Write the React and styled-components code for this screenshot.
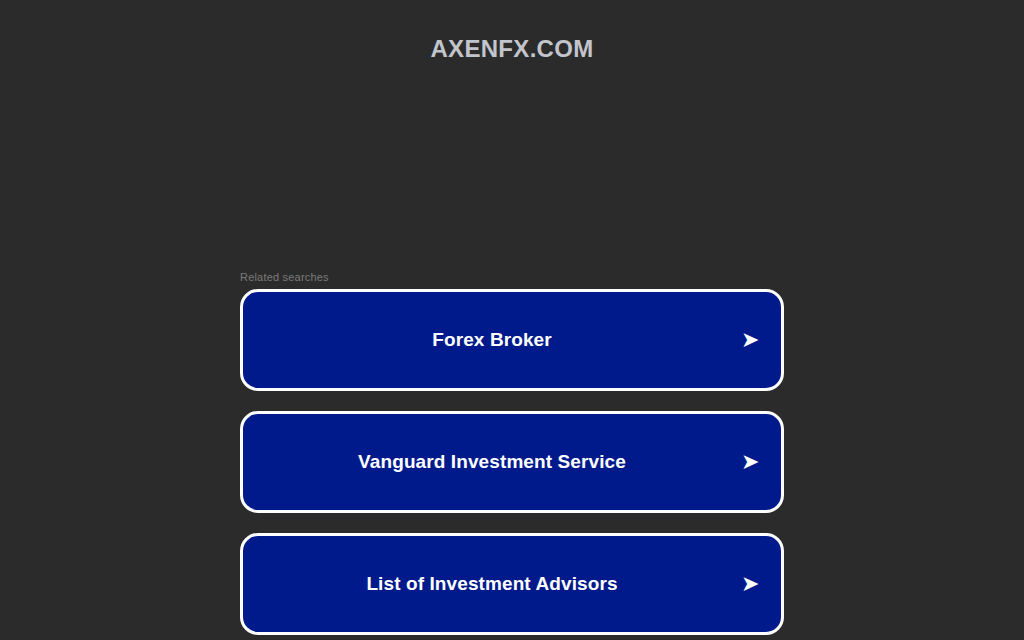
import React from "react";
import styled, { createGlobalStyle } from "styled-components";

const Global = createGlobalStyle`
  html, body {
    margin: 0;
    padding: 0;
    background: #2b2b2b;
    font-family: "Liberation Sans", Arial, sans-serif;
  }
`;

const searches = [
  "Forex Broker",
  "Vanguard Investment Service",
  "List of Investment Advisors",
];

const App = () => {
  return (
    <Page>
      <Global />
      <Domain>AXENFX.COM</Domain>
      <Results>
        <Label>Related searches</Label>
        <List>
          {searches.map((s) => (
            <Card key={s} href="#">
              <CardText>{s}</CardText>
              <Arrow>➤</Arrow>
            </Card>
          ))}
        </List>
      </Results>
    </Page>
  );
};

const Page = styled.div`
  min-height: 640px;
  display: flex;
  flex-direction: column;
  align-items: center;
`;

const Domain = styled.h1`
  margin: 35px 0 0;
  font-size: 24px;
  line-height: 28px;
  font-weight: 700;
  color: #c3c5cd;
  letter-spacing: 0.3px;
`;

const Results = styled.div`
  width: 544px;
  margin-top: 208px;
`;

const Label = styled.div`
  font-size: 11px;
  line-height: 13px;
  color: #7a7a7a;
  letter-spacing: 0.2px;
  margin-bottom: 5px;
`;

const List = styled.div`
  display: flex;
  flex-direction: column;
  gap: 20px;
`;

const Card = styled.a`
  display: flex;
  align-items: center;
  height: 96px;
  border: 3px solid #fff;
  border-radius: 18px;
  background: #011a8b;
  color: #fff;
  text-decoration: none;
  padding-right: 22px;
`;

const CardText = styled.span`
  flex: 1;
  text-align: center;
  font-size: 19px;
  font-weight: 700;
  letter-spacing: 0.1px;
`;

const Arrow = styled.span`
  width: 18px;
  font-size: 22px;
  line-height: 1;
`;

export default App;
